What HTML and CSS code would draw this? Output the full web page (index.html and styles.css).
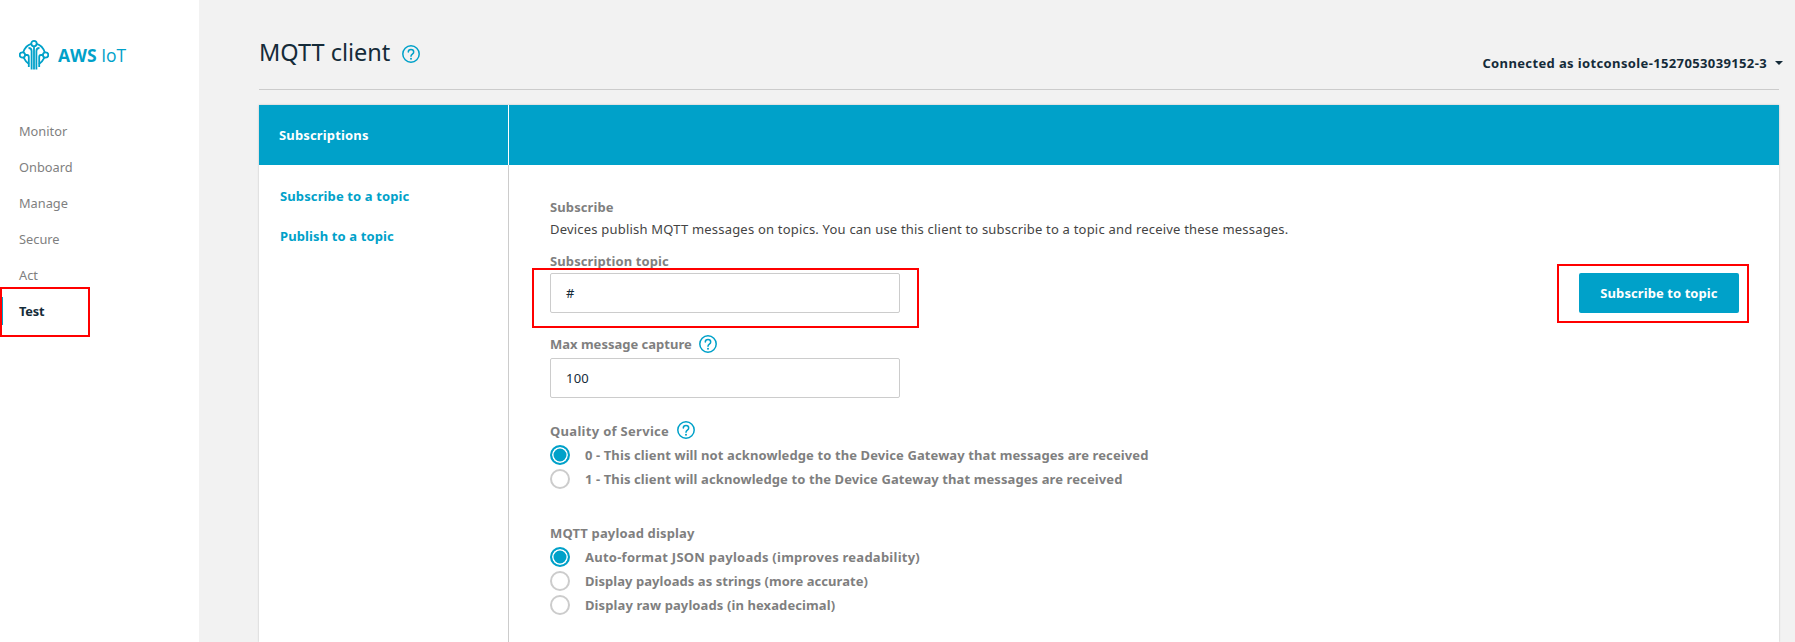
FILE: index.html
```html
<!DOCTYPE html>
<html lang="en">
<head>
<meta charset="utf-8">
<title>MQTT client</title>
<link rel="stylesheet" href="styles.css">
</head>
<body>
<div class="app">
  <aside class="sidebar">
    <div class="brand">
      <svg class="brand-icon" viewBox="0 0 30 30" fill="none" stroke="#00a1c9" stroke-width="1.8">
        <circle cx="15" cy="3.6" r="2.7"/>
        <circle cx="3.4" cy="15" r="2.7"/>
        <circle cx="26.6" cy="15" r="2.7"/>
        <path d="M12.4 3.8 Q6.5 5.2 4.2 12.4"/>
        <path d="M17.6 3.8 Q23.5 5.2 25.8 12.4"/>
        <path d="M4.6 17.6 Q6.5 21.5 10 24"/>
        <path d="M25.4 17.6 Q23.5 21.5 20 24"/>
        <path d="M12.6 29.5 V11 Q12.6 8 9.5 8"/>
        <path d="M17.4 29.5 V11 Q17.4 8 20.5 8"/>
        <path d="M15 6.4 V29.5"/>
        <path d="M6.2 15 H8 Q9.8 15 9.8 17 V27"/>
        <path d="M23.8 15 H22 Q20.2 15 20.2 17 V27"/>
      </svg>
      <span class="brand-name"><b>AWS</b> IoT</span>
    </div>
    <nav class="nav">
      <a class="nav-item">Monitor</a>
      <a class="nav-item">Onboard</a>
      <a class="nav-item">Manage</a>
      <a class="nav-item">Secure</a>
      <a class="nav-item">Act</a>
      <a class="nav-item nav-active">Test</a>
    </nav>
  </aside>
  <main class="main">
    <header class="page-head">
      <h1 class="page-title">MQTT client</h1>
      <svg class="help help-large" viewBox="0 0 18 18"><circle cx="9" cy="9" r="8.2"/><path d="M6.3 7 C6.3 3.7 11.7 3.7 11.7 7 C11.7 9.2 9 9 9 11.3"/><circle class="dot" cx="9" cy="13.7" r="1"/></svg>
      <div class="connection">Connected as iotconsole-1527053039152-3<span class="caret"></span></div>
    </header>
    <section class="panel">
      <div class="panel-side-head">Subscriptions</div>
      <div class="panel-main-head"></div>
      <div class="panel-side">
        <a class="side-link">Subscribe to a topic</a>
        <a class="side-link">Publish to a topic</a>
      </div>
      <div class="panel-body">
        <h2 class="label">Subscribe</h2>
        <p class="desc">Devices publish MQTT messages on topics. You can use this client to subscribe to a topic and receive these messages.</p>
        <div class="topic-row">
          <div class="field">
            <label class="label">Subscription topic</label>
            <div class="input">#</div>
          </div>
          <button class="primary">Subscribe to topic</button>
        </div>
        <div class="field field-max">
          <div class="label-row"><label class="label">Max message capture</label><svg class="help" viewBox="0 0 18 18"><circle cx="9" cy="9" r="8.2"/><path d="M6.3 7 C6.3 3.7 11.7 3.7 11.7 7 C11.7 9.2 9 9 9 11.3"/><circle class="dot" cx="9" cy="13.7" r="1"/></svg></div>
          <div class="input">100</div>
        </div>
        <div class="group group-qos">
          <div class="label-row"><span class="label">Quality of Service</span><svg class="help" viewBox="0 0 18 18"><circle cx="9" cy="9" r="8.2"/><path d="M6.3 7 C6.3 3.7 11.7 3.7 11.7 7 C11.7 9.2 9 9 9 11.3"/><circle class="dot" cx="9" cy="13.7" r="1"/></svg></div>
          <div class="radio radio-on"><span class="mark"></span>0 - This client will not acknowledge to the Device Gateway that messages are received</div>
          <div class="radio"><span class="mark"></span>1 - This client will acknowledge to the Device Gateway that messages are received</div>
        </div>
        <div class="group group-payload">
          <div class="label-row"><span class="label">MQTT payload display</span></div>
          <div class="radio radio-on radio-wide"><span class="mark"></span>Auto-format JSON payloads (improves readability)</div>
          <div class="radio radio-tight"><span class="mark"></span>Display payloads as strings (more accurate)</div>
          <div class="radio"><span class="mark"></span>Display raw payloads (in hexadecimal)</div>
        </div>
      </div>
    </section>
  </main>
</div>
<div class="mark-box box-test"></div>
<div class="mark-box box-topic"></div>
<div class="mark-box box-button"></div>
</body>
</html>
```
FILE: styles.css
```css
* { box-sizing: border-box; }
html, body { margin: 0; height: 100%; overflow: hidden; }
body { font-family: "Noto Sans", "Open Sans", sans-serif; font-size: 13px; background: #f2f2f2; color: #152b39; position: relative; }
.app { display: flex; height: 642px; }

.sidebar { width: 199px; flex: none; background: #fff; padding-top: 40px; }
.brand { display: flex; align-items: center; gap: 9px; padding-left: 19px; height: 30px; }
.brand-icon { width: 30px; height: 30px; flex: none; }
.brand-name { font-family: "Open Sans", sans-serif; font-size: 17.5px; color: #00a1c9; }
.brand-name b { font-weight: 700; }
.nav { display: flex; flex-direction: column; margin-top: 43px; }
.nav-item { height: 36px; line-height: 36px; padding-left: 19px; font-size: 12.8px; color: #7f7f7f; position: relative; }
.nav-active { color: #152b39; font-weight: 700; letter-spacing: -.2px; }
.nav-active::before { content: ""; position: absolute; left: 1px; top: 4px; width: 2px; height: 28px; background: #00a1c9; }

.main { flex: 1; padding-right: 16px; padding-left: 60px; display: flex; flex-direction: column; min-width: 0; }
.page-head { height: 90px; flex: none; border-bottom: 1px solid #ccc; display: flex; align-items: flex-start; position: relative; }
.page-title { font-size: 23.5px; font-weight: 400; margin: 35px 0 0; line-height: 34px; color: #152b39; }
.help { width: 18px; height: 18px; flex: none; fill: none; stroke: #00a1c9; stroke-width: 1.5; stroke-linecap: round; }
.help .dot { fill: #00a1c9; stroke: none; }
.help-large { margin: 45px 0 0 12px; }
.connection { margin-left: auto; margin-top: 53px; font-size: 13px; font-weight: 700; line-height: 20px; letter-spacing: .37px; white-space: nowrap; margin-right: -4px; }
.caret { display: inline-block; width: 0; height: 0; margin-left: 8px; vertical-align: 3px; border-left: 4px solid transparent; border-right: 4px solid transparent; border-top: 4px solid #152b39; }

.panel { margin-top: 15px; flex: 1; display: grid; grid-template-columns: 250px 1fr; grid-template-rows: 60px 1fr; background: #fff; box-shadow: 0 0 2px rgba(0,0,0,.2); min-height: 0; }
.panel-side-head { background: #00a1c9; color: #fff; font-weight: 700; padding-left: 20px; line-height: 60px; font-size: 13px; letter-spacing: .15px; border-right: 1px solid #fff; }
.panel-main-head { background: #00a1c9; }
.panel-side { display: flex; flex-direction: column; gap: 20px; padding: 21px 0 0 21px; border-right: 1px solid #ccc; }
.side-link { font-size: 13px; font-weight: 700; letter-spacing: .12px; color: #00a1c9; line-height: 20px; }
.panel-body { padding: 33px 40px 0 41px; overflow: hidden; }

.label { display: block; margin: 0; font-size: 13px; font-weight: 700; letter-spacing: .1px; line-height: 18px; color: #7f7f7f; }
.desc { margin: 4px 0 0; font-size: 13px; line-height: 18px; letter-spacing: .2px; color: #444; }
.topic-row { display: flex; justify-content: space-between; align-items: flex-end; margin-top: 14px; }
.field { width: 350px; }
.field-max { margin-top: 20px; }
.field-max .label { letter-spacing: 0; }
.input { height: 40px; line-height: 38px; padding: 0 15px; border: 1px solid #ccc; border-radius: 2px; background: #fff; font-size: 13px; letter-spacing: .2px; color: #152b39; margin-top: 3px; }
.primary { width: 160px; height: 40px; border: 0; border-radius: 2px; background: #00a1c9; color: #fff; font: 700 13px "Noto Sans", "Open Sans", sans-serif; padding: 0; letter-spacing: .08px; }
.label-row { display: flex; align-items: center; gap: 7px; height: 22px; }

.group-qos { margin-top: 22px; }
.group-qos .label { letter-spacing: .3px; }
.group-qos .help { margin-top: -2px; margin-left: 1px; }
.group-payload { margin-top: 31px; }
.group-payload .label { letter-spacing: .15px; }
.label-row + .radio { margin-top: 1px; }
.radio { display: flex; align-items: center; height: 24px; font-size: 13px; font-weight: 700; letter-spacing: .1px; color: #7f7f7f; }
.radio-wide { letter-spacing: .25px; }
.radio-tight { letter-spacing: .05px; }
.mark { width: 20px; height: 20px; border: 2px solid #ccc; border-radius: 50%; margin-right: 15px; flex: none; background: #fff; }
.radio-on .mark { border: 2.5px solid #00a1c9; background: #00a1c9; box-shadow: inset 0 0 0 1.5px #fff; }

.mark-box { position: absolute; border: 2px solid #f00; }
.box-test { left: 0; top: 287px; width: 90px; height: 50px; }
.box-topic { left: 532px; top: 268px; width: 387px; height: 60px; }
.box-button { left: 1557px; top: 264px; width: 192px; height: 59px; }
```
